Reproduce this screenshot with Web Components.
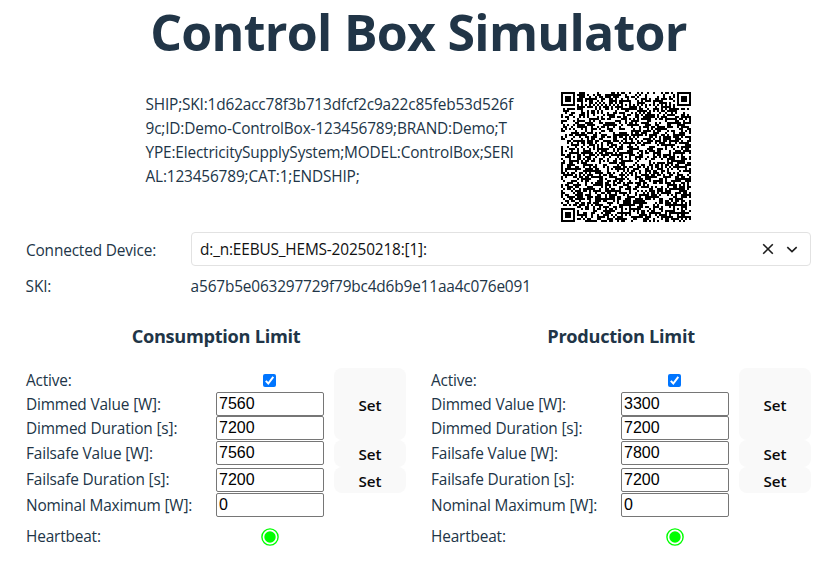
<!DOCTYPE html>
<html lang="en"><head><meta charset="utf-8"><title>Control Box Simulator</title>
<style>body{margin:0;background:#fff;color:#213547;font:15.4px/24px "Open Sans","Noto Sans",sans-serif;letter-spacing:-.165px}</style></head>
<body><control-box-app></control-box-app>
<script>
const define=(name,html,init)=>customElements.define(name,class extends HTMLElement{
  constructor(){super();this.attachShadow({mode:'open'}).innerHTML=html}
  connectedCallback(){if(init)init(this,this.shadowRoot)}
});

/* QR encoder: version 12, error correction level Q, byte mode */
const mul=(x,y)=>{let z=0;for(let i=7;i>=0;i--){z=(z<<1)^((z>>>7)*0x11D);z^=((y>>>i)&1)*x}return z};
function encodeQR(text,mask){
  const n=65,el=26,nb=10,fb=3,total=466,cap=total-el*nb,bits=[];
  const put=(v,l)=>{for(let i=l-1;i>=0;i--)bits.push(v>>>i&1)};
  put(4,4);put(text.length,16);for(const c of text)put(c.charCodeAt(0),8);
  put(0,Math.min(4,cap*8-bits.length));while(bits.length%8)bits.push(0);
  for(let p=0xEC;bits.length<cap*8;p^=0xFD)put(p,8);
  const d=[];for(let i=0;i<bits.length;i+=8)d.push(parseInt(bits.slice(i,i+8).join(''),2));
  const g=new Array(el).fill(0);g[el-1]=1;let r=1;
  for(let i=0;i<el;i++){for(let j=0;j<el;j++){g[j]=mul(g[j],r);if(j+1<el)g[j]^=g[j+1]}r=mul(r,2)}
  const short=nb-total%nb,sl=Math.floor(total/nb),bl=[];let k=0;
  for(let i=0;i<nb;i++){
    const dat=d.slice(k,k+sl-el+(i<short?0:1));k+=dat.length;
    const e=new Array(el).fill(0);
    for(const b of dat){const f=b^e.shift();e.push(0);g.forEach((c,j)=>e[j]^=mul(c,f))}
    bl.push([dat,e]);
  }
  const out=[];
  for(let i=0;i<=sl-el;i++)for(const b of bl)if(i<b[0].length)out.push(b[0][i]);
  for(let i=0;i<el;i++)for(const b of bl)out.push(b[1][i]);
  const m=[],f=[];for(let y=0;y<n;y++){m.push(new Array(n).fill(0));f.push(new Array(n).fill(0))}
  const set=(x,y,v)=>{if(x>=0&&y>=0&&x<n&&y<n){m[y][x]=v?1:0;f[y][x]=1}};
  for(let i=0;i<n;i++){set(6,i,i%2==0);set(i,6,i%2==0)}
  for(const[x,y]of[[3,3],[n-4,3],[3,n-4]])for(let a=-4;a<=4;a++)for(let b=-4;b<=4;b++){const q=Math.max(Math.abs(a),Math.abs(b));set(x+a,y+b,q!=2&&q!=4)}
  const al=[6,32,58];
  al.forEach((x,i)=>al.forEach((y,j)=>{if((i==0&&j!=1)||(i==2&&j==0))return;for(let a=-2;a<=2;a++)for(let b=-2;b<=2;b++)set(x+a,y+b,Math.max(Math.abs(a),Math.abs(b))!=1)}));
  {const D=fb<<3|mask;let q=D;for(let i=0;i<10;i++)q=(q<<1)^((q>>>9)*0x537);
   const B=(D<<10|q)^0x5412,b=i=>B>>>i&1;
   for(let i=0;i<=5;i++)set(8,i,b(i));set(8,7,b(6));set(8,8,b(7));set(7,8,b(8));
   for(let i=9;i<15;i++)set(14-i,8,b(i));for(let i=0;i<8;i++)set(n-1-i,8,b(i));
   for(let i=8;i<15;i++)set(8,n-15+i,b(i));set(8,n-8,1)}
  {let q=12;for(let i=0;i<12;i++)q=(q<<1)^((q>>>11)*0x1F25);const B=12<<12|q;
   for(let i=0;i<18;i++){const a=n-11+i%3,b=Math.floor(i/3);set(a,b,B>>>i&1);set(b,a,B>>>i&1)}}
  let i=0;
  for(let R=n-1;R>=1;R-=2){if(R==6)R=5;for(let v=0;v<n;v++)for(let j=0;j<2;j++){
    const x=R-j,y=((R+1)&2)==0?n-1-v:v;
    if(!f[y][x]&&i<out.length*8){m[y][x]=out[i>>>3]>>>(7-(i&7))&1;i++}}}
  const M=(x,y)=>(x*y%2+x*y%3)%2;
  for(let y=0;y<n;y++)for(let x=0;x<n;x++)if(!f[y][x]&&M(x,y)==0)m[y][x]^=1;
  return m;
}

define('qr-code','<style>:host{display:block;width:130px;height:130px}svg{display:block}</style><svg width="130" height="130" viewBox="0 0 65 65" shape-rendering="crispEdges"><path/></svg>',(el,s)=>{
  const m=encodeQR(el.getAttribute('value'),6);
  s.querySelector('path').setAttribute('d',m.map((r,y)=>r.map((v,x)=>v?`M${x} ${y}h1v1h-1z`:'').join('')).join(''));
});

define('page-title',`<style>:host{display:block;height:92px;box-sizing:border-box;padding-left:17px;text-align:center}
h1{margin:0;font-size:50px;line-height:65px;font-weight:700;letter-spacing:-.7px}</style><h1><slot></slot></h1>`);

define('device-select',`<style>:host{display:flex;align-items:center;box-sizing:border-box;height:34px;border:1px solid #e2e2e2;border-radius:4px;padding:0 12px 0 8px;color:#111;background:#fff}
.v{flex:1;margin-top:1px}svg{display:block;fill:none;stroke:#1c1c1c;stroke-width:1.6}.x{margin-right:12px}</style>
<span class="v"><slot></slot></span>
<svg class="x" width="12" height="12" viewBox="0 0 12 12"><path d="M1.2 1.2l9.6 9.6M10.8 1.2L1.2 10.8"/></svg>
<svg width="12" height="12" viewBox="0 0 12 12"><path d="M1.3 4.2L6 8.6l4.7-4.4"/></svg>`);

define('number-field','<style>:host{display:block;height:24px}input{display:block;box-sizing:border-box;width:108px;height:24px;margin:0;padding:0 2px;border:1px solid #767676;border-radius:2px;background:#fff;color:#000;font:16px/22px "Liberation Sans",Arial,sans-serif;letter-spacing:0;outline:0}</style><input type="text">');

define('set-button','<style>:host{display:flex}button{flex:1;border:0;border-radius:8px;margin:0;padding:1px 0 0;background:#f9f9f9;color:#0a0a0a;font:600 15.2px/20px "Open Sans","Noto Sans",sans-serif;letter-spacing:0}</style><button><slot></slot></button>');

define('heart-beat','<style>:host{display:block}svg{display:block}</style><svg width="18" height="18" viewBox="0 0 18 18"><circle cx="9" cy="9" r="8.1" fill="#fff" stroke="#0f0" stroke-width="1.4"/><circle cx="9" cy="9" r="5.7" fill="#0f0"/></svg>');

define('limit-panel',`<style>:host{display:block;width:380px}
h2{margin:0 0 20px;font-size:18.2px;line-height:24px;font-weight:700;letter-spacing:-.3px;text-align:center}
.g{display:grid;grid-template-columns:190px 108px 72px;grid-template-rows:24px 24px 24px 27px 26px 25px 38px;align-items:start}
.g>*{grid-column:1}.g>label{align-self:center;line-height:24px}
.g>label.n{margin-top:2px}
.g>.f{grid-column:2}.g>.b{grid-column:3;align-self:stretch;margin-left:10px;width:72px}
.d{margin-top:1px}
.g>.c{grid-column:2;justify-self:center;align-self:center;margin-right:1px}
input{appearance:none;display:block;width:13px;height:13px;margin:1px 0 0;border-radius:2px;background:#0075ff}
.k{display:grid}.k>*{grid-area:1/1}svg{margin-top:1px;fill:none;stroke:#fff;stroke-width:2}
</style><h2><slot></slot></h2><div class="g">
<label class="n" style="grid-row:1">Active:</label><div class="c k" style="grid-row:1"><input type="checkbox" checked><svg width="13" height="13" viewBox="0 0 13 13"><path d="M2.8 6.9l2.5 2.6 5-6.6"/></svg></div>
<label class="n" style="grid-row:2">Dimmed Value [W]:</label><number-field class="f" style="grid-row:2"></number-field>
<label class="n" style="grid-row:3">Dimmed Duration [s]:</label><number-field class="f" style="grid-row:3"></number-field>
<label style="grid-row:4">Failsafe Value [W]:</label><number-field class="f d" style="grid-row:4"></number-field>
<label style="grid-row:5">Failsafe Duration [s]:</label><number-field class="f d" style="grid-row:5"></number-field>
<label style="grid-row:6">Nominal Maximum [W]:</label><number-field class="f" style="grid-row:6"></number-field>
<label style="grid-row:7">Heartbeat:</label><heart-beat class="c" style="grid-row:7"></heart-beat>
<set-button class="b" style="grid-row:1/4">Set</set-button><set-button class="b" style="grid-row:4">Set</set-button><set-button class="b" style="grid-row:5">Set</set-button>
</div>`,(el,s)=>{
  const v=el.getAttribute('values').split(' ');
  s.querySelectorAll('number-field').forEach((f,i)=>{f.shadowRoot.querySelector('input').value=v[i]});
});

const ship=['SHIP;SKI:1d62acc78f3b713dfcf2c9a22c85feb53d526f','9c;ID:Demo-ControlBox-123456789;BRAND:Demo;T','YPE:ElectricitySupplySystem;MODEL:ControlBox;SERI','AL:123456789;CAT:1;ENDSHIP;'];
define('control-box-app',`<style>:host{display:block;width:820px;height:569px;background:#fff}
.ship{display:grid;grid-template-columns:415.5px 130px;padding-left:145.5px;height:140px}
.ship p{margin:1px 0 0;white-space:nowrap}
.row{display:grid;grid-template-columns:165px 620px;padding-left:26px;align-items:center}
.r1{height:34px}.r1 label{margin-top:3px}.r2{height:41px;margin-bottom:17px}.r2 span{margin-left:-.4px}
.panels{display:flex;gap:25px;padding-left:26px}</style>
<page-title>Control Box Simulator</page-title>
<div class="ship"><p>${ship.join('<br>')}</p><qr-code value="${ship.join('')}"></qr-code></div>
<div class="row r1"><label>Connected Device:</label><device-select>d:_n:EEBUS_HEMS-20250218:[1]:</device-select></div>
<div class="row r2"><span>SKI:</span><span>a567b5e063297729f79bc4d6b9e11aa4c076e091</span></div>
<div class="panels"><limit-panel values="7560 7200 7560 7200 0">Consumption Limit</limit-panel><limit-panel values="3300 7200 7800 7200 0">Production Limit</limit-panel></div>`);
</script></body></html>
